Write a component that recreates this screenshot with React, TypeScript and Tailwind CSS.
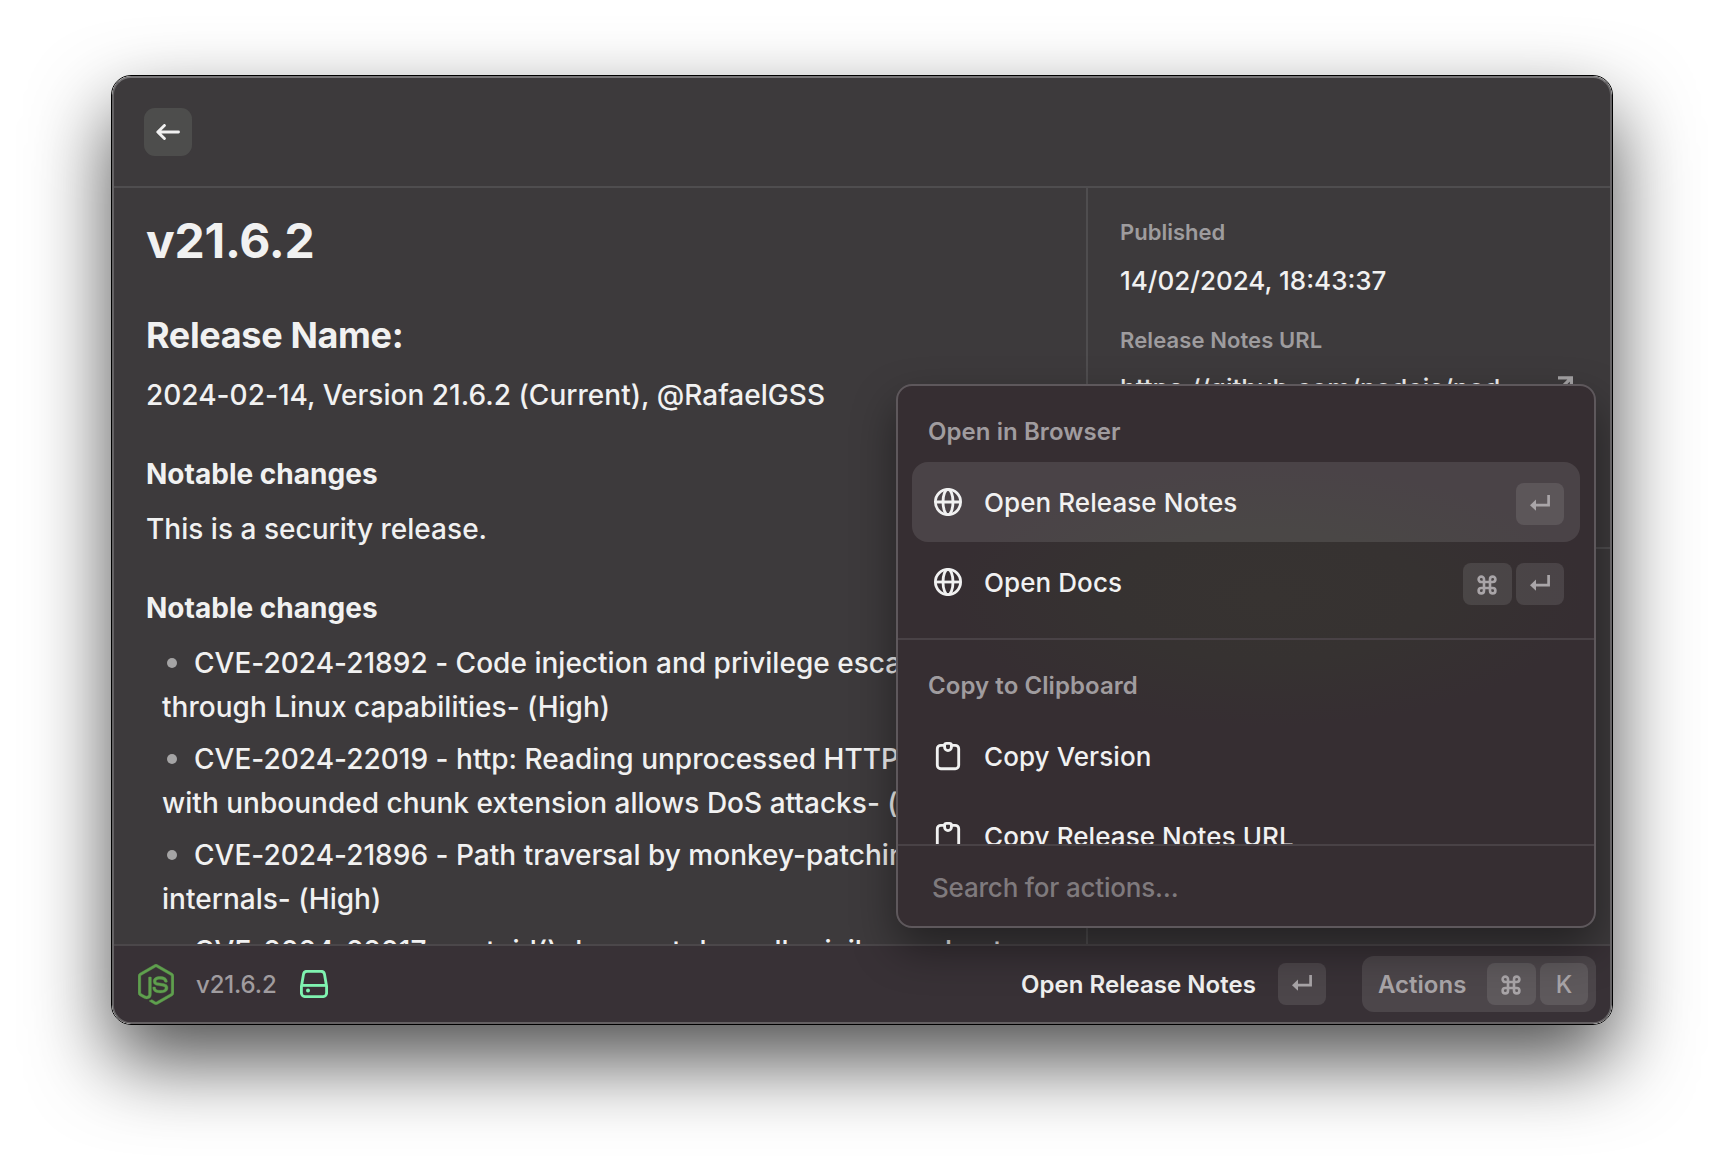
import type { ReactNode } from "react";
import { FaNodeJs } from "react-icons/fa";

const changes = [
  ["CVE-2024-21892 - Code injection and privilege escalation", "through Linux capabilities- (High)"],
  ["CVE-2024-22019 - http: Reading unprocessed HTTP request", "with unbounded chunk extension allows DoS attacks- (High)"],
  ["CVE-2024-21896 - Path traversal by monkey-patching Buffer", "internals- (High)"],
  ["CVE-2024-22017 - setuid() does not drop all privileges due to", ""],
];

function ArrowLeftIcon() {
  return (
    <svg viewBox="0 0 24 16" className="h-4 w-6" fill="none" stroke="#f1f1f1" strokeWidth="2.9" strokeLinecap="round" strokeLinejoin="round">
      <path d="M22.5 8H2M8.400 1.500L1.800 8l6.600 6.500" />
    </svg>
  );
}

function ArrowUpRightIcon() {
  return (
    <svg viewBox="0 0 24 24" className="size-6" fill="none" stroke="#a3a1a3" strokeWidth="3.2">
      <path d="M4 3.8h13.4V17M17 4.200L4.500 16.700" />
    </svg>
  );
}

function GlobeIcon() {
  return (
    <svg viewBox="0 0 32 32" className="size-8 shrink-0" fill="none" stroke="#f1f1f1" strokeWidth="2.8">
      <circle cx="16" cy="16" r="12.6" />
      <ellipse cx="16" cy="16" rx="5" ry="12.6" />
      <path d="M3.3 16h25.4" />
    </svg>
  );
}

function ClipboardIcon() {
  return (
    <svg viewBox="0 0 32 32" className="size-8 shrink-0" fill="none" stroke="#f1f1f1" strokeWidth="2.85" strokeLinejoin="round">
      <path d="M12.4 5.33H8.8a3.5 3.5 0 0 0-3.5 3.5v16.4a3.5 3.5 0 0 0 3.5 3.5h14.4a3.5 3.5 0 0 0 3.5-3.5V8.8a3.5 3.5 0 0 0-3.5-3.5h-3.6" />
      <path d="M12.6 5.2c0-1.1.8-1.9 1.9-1.9h3c1.1 0 1.9.8 1.9 1.9v2a3.4 3.4 0 0 1-6.8 0z" />
    </svg>
  );
}

function DriveIcon() {
  return (
    <svg viewBox="0 0 28 28" className="size-7" fill="none" stroke="#7ff3b0" strokeWidth="2.85" strokeLinejoin="round">
      <path d="M1.4 16.6 3.500 4.300a3.600 3.600 0 0 1 3.600-3h13.800a3.600 3.600 0 0 1 3.600 3l2.100 12.300v6.400a3.600 3.600 0 0 1-3.600 3.600H5a3.600 3.600 0 0 1-3.600-3.600z" />
      <path d="M1.6 15.400h24.800" />
      <circle cx="8" cy="20.5" r="2" fill="#7ff3b0" stroke="none" />
    </svg>
  );
}

function ReturnIcon() {
  return (
    <svg viewBox="0 0 20 16" className="mb-1 h-4 w-5" fill="none">
      <path d="M18.600 0v10.200H5" stroke="#a9a5a8" strokeWidth="2.7" />
      <path d="M0 10.200 6 4.600v11.200z" fill="#a9a5a8" />
    </svg>
  );
}

function CommandIcon() {
  return (
    <svg viewBox="0 0 20 20" className="mr-px size-5" fill="none" stroke="#a9a5a8" strokeWidth="2.6">
      <path d="M7 7h6v6H7zM7 7H4.300A2.700 2.700 0 1 1 7 4.300zM13 7V4.300A2.700 2.700 0 1 1 15.700 7zM13 13h2.700A2.700 2.700 0 1 1 13 15.700zM7 13v2.700A2.700 2.700 0 1 1 4.300 13z" />
    </svg>
  );
}

function Key({ children, wide = false }: { children: ReactNode; wide?: boolean }) {
  return (
    <kbd
      className={`flex h-[42px] shrink-0 items-center justify-center rounded-lg bg-white/10 pt-px font-[Inter] text-2xl font-medium text-[#a9a5a8] ${
        wide ? "w-[49px]" : "w-12"
      }`}
    >
      {children}
    </kbd>
  );
}

function ActionRow({ icon, label, keys, selected = false }: { icon: ReactNode; label: string; keys?: ReactNode; selected?: boolean }) {
  return (
    <li className={`mx-3.5 flex h-20 shrink-0 items-center rounded-2xl pr-4 pl-5 ${selected ? "bg-white/10" : ""}`}>
      {icon}
      <span className="ml-5 flex-1 text-[26px] font-medium tracking-[0.08px] text-[#f1f1f1]">{label}</span>
      {keys && <span className="mt-1 flex gap-1">{keys}</span>}
    </li>
  );
}

function SectionTitle({ children }: { children: ReactNode }) {
  return (
    <h3 className="mt-3.5 flex h-[62px] shrink-0 items-center pt-0.5 pl-[30px] text-2xl font-semibold tracking-[0.07px] text-[#a09c9f]">
      {children}
    </h3>
  );
}

function ActionPanel() {
  return (
    <div className="absolute top-[306px] right-3.5 flex h-[544px] w-[700px] flex-col overflow-hidden rounded-2xl border-2 border-[#5e585c] bg-[#362e32] bg-[radial-gradient(ellipse_320px_130px_at_370px_210px,#373331_0%,#363231_50%,transparent_100%)] shadow-[0_20px_44px_rgba(0,0,0,0.42)]">
      <div className="flex min-h-0 flex-1 flex-col overflow-hidden">
        <SectionTitle>Open in Browser</SectionTitle>
        <ul>
          <ActionRow selected icon={<GlobeIcon />} label="Open Release Notes" keys={<Key><ReturnIcon /></Key>} />
          <ActionRow
            icon={<GlobeIcon />}
            label="Open Docs"
            keys={
              <>
                <Key wide><CommandIcon /></Key>
                <Key><ReturnIcon /></Key>
              </>
            }
          />
        </ul>
        <div className="mt-4 h-0.5 shrink-0 bg-[#494246]" />
        <SectionTitle>Copy to Clipboard</SectionTitle>
        <ul>
          <ActionRow icon={<ClipboardIcon />} label="Copy Version" />
          <ActionRow icon={<ClipboardIcon />} label="Copy Release Notes URL" />
        </ul>
      </div>
      <div className="flex h-[82px] shrink-0 items-center border-t-2 border-[#494246] pt-0.5 pl-[34px] text-[26px] font-medium tracking-[-0.2px] text-[#7f7a7d]">
        Search for actions…
      </div>
    </div>
  );
}

function Notes() {
  return (
    <main className="min-w-0 flex-1 overflow-hidden pt-[25px] pl-8 text-[28px] leading-[44px] font-medium tracking-[0.02px] whitespace-nowrap text-[#f1f1f1]">
      <h1 className="text-[48px] leading-[56px] font-bold tracking-[-0.25px]">v21.6.2</h1>
      <h2 className="mt-11 text-4xl leading-[44px] font-bold tracking-[-0.35px]">Release Name:</h2>
      <p className="mt-4">2024-02-14, Version 21.6.2 (Current), @RafaelGSS</p>
      <h3 className="mt-[35px] font-bold">Notable changes</h3>
      <p className="mt-[11px]">This is a security release.</p>
      <h3 className="mt-[35px] font-bold">Notable changes</h3>
      <ul className="mt-[11px] flex flex-col gap-2 pl-4">
        {changes.map(([first, second]) => (
          <li key={first}>
            <div className="flex items-center">
              <span className="mr-[17px] ml-[5px] size-2.5 rounded-full bg-[#a5a4a5]" />
              {first}
            </div>
            {second && <div>{second}</div>}
          </li>
        ))}
      </ul>
    </main>
  );
}

function Details() {
  return (
    <aside className="w-[524px] shrink-0 border-l-2 border-[#4f4d4f] text-[26px] font-medium text-[#f1f1f1]">
      <dl className="flex h-[361px] flex-col border-b-2 border-[#4f4d4f] px-8 pt-6">
        <dt className="h-10 text-[22px] leading-10 font-semibold text-[#9e9c9e]">Published</dt>
        <dd className="mb-2 h-[60px] leading-[58px]">14/02/2024, 18:43:37</dd>
        <dt className="h-10 text-[22px] leading-10 font-semibold tracking-[0.1px] text-[#9e9c9e]">Release Notes URL</dt>
        <dd className="flex h-[60px] justify-between leading-[58px]">
          https://github.com/nodejs/nod…
          <span className="mt-3.5"><ArrowUpRightIcon /></span>
        </dd>
      </dl>
    </aside>
  );
}

export default function App() {
  return (
    <div className="h-[1172px] w-[1724px] overflow-hidden bg-white pt-[75px] pl-[111px] font-[Inter,sans-serif]">
      <div className="h-[950px] w-[1502px] overflow-hidden rounded-[20px] border border-black shadow-[0_36px_80px_rgba(0,0,0,0.69)]">
        <div className="relative flex h-full flex-col overflow-hidden rounded-[19px] border-2 border-t-[#787678] border-r-[#656365] border-b-[#656163] border-l-[#656365] bg-[#3d3a3c]">
          <header className="flex h-[110px] shrink-0 items-center border-b-2 border-[#4f4d4f] pl-[30px]">
            <button className="flex size-12 items-center justify-center rounded-[11px] bg-[#4d4d4c]">
              <ArrowLeftIcon />
            </button>
          </header>
          <div className="flex min-h-0 flex-1">
            <Notes />
            <Details />
          </div>
          <footer className="flex h-[78px] shrink-0 items-center border-t-2 border-[#4b474a] bg-[#383136] pr-3.5 pl-6 text-2xl">
            <FaNodeJs className="h-[41px] w-9 stroke-[#5fa04e] stroke-[5px] text-[#5fa04e]" />
            <span className="ml-[22px] pt-0.5 font-medium tracking-[-0.15px] text-[#a09c9f]">v21.6.2</span>
            <span className="ml-[23px]"><DriveIcon /></span>
            <span className="mr-[22px] ml-auto pt-0.5 font-semibold tracking-[0.04px] text-[#f1f1f1]">Open Release Notes</span>
            <Key><ReturnIcon /></Key>
            <div className="ml-9 flex h-14 w-[234px] items-center gap-1 rounded-xl bg-white/10 pr-2 pl-4">
              <span className="flex-1 pt-0.5 font-semibold text-[#a9a5a8]">Actions</span>
              <Key wide><CommandIcon /></Key>
              <Key>K</Key>
            </div>
          </footer>
          <ActionPanel />
        </div>
      </div>
    </div>
  );
}
